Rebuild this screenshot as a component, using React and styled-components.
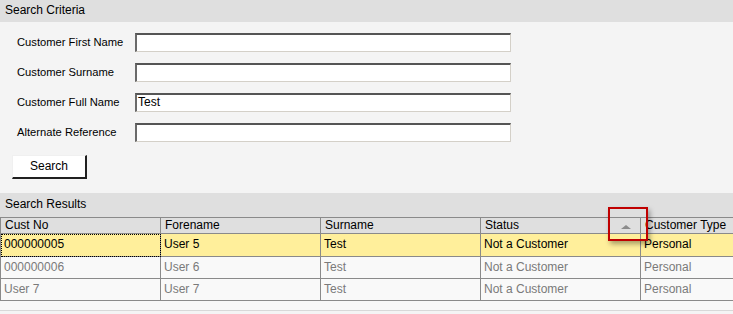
import React from "react";
import styled, { createGlobalStyle } from "styled-components";

const GlobalStyle = createGlobalStyle`
  html, body {
    margin: 0;
    padding: 0;
    background: #f4f4f4;
    font-family: "Liberation Sans", Arial, sans-serif;
    font-size: 11px;
    color: #000;
  }
`;

const Page = styled.div`
  width: 733px;
  height: 314px;
  overflow: hidden;
  background: #f4f4f4;
`;

const SectionBar = styled.div`
  height: 22px;
  line-height: 21px;
  padding-left: 5px;
  background: #dfdfdf;
  font-size: 12px;
`;

const Criteria = styled.div`
  display: flex;
  flex-direction: column;
  gap: 11px;
  padding: 11px 0 0 17px;
`;

const FieldRow = styled.div`
  display: flex;
  align-items: center;
  height: 19px;
`;

const Label = styled.label`
  width: 118px;
  margin-top: -2px;
  font-size: 11.2px;
`;

const TextBox = styled.div`
  box-sizing: border-box;
  width: 376px;
  height: 19px;
  background: #fff;
  border-top: 2px solid #555;
  border-left: 2px solid #6a6a6a;
  border-right: 1px solid #d4d0c8;
  border-bottom: 1px solid #d4d0c8;
  padding-left: 1px;
  line-height: 15px;
  font-size: 12px;
`;

const Button = styled.div`
  box-sizing: border-box;
  margin: 2px 0 0 -5px;
  width: 75px;
  height: 24px;
  background: #fff;
  border-top: 1px solid #f0f0f0;
  border-left: 1px solid #f0f0f0;
  border-right: 2px solid #202020;
  border-bottom: 2px solid #202020;
  text-align: center;
  line-height: 21px;
  font-size: 12px;
`;

const ResultsBar = styled(SectionBar)`
  margin-top: 14px;
  height: 24px;
  line-height: 22px;
`;

const GridWrap = styled.div`
  position: relative;
  background: #f8f8f8;
  height: 93px;
  border-bottom: 1px solid #d8d8d8;
`;

const Grid = styled.div`
  display: grid;
  grid-template-columns: repeat(5, 160px);
  border-top: 1px solid #8a8a8a;
  border-left: 1px solid #8a8a8a;
`;

const HeadCell = styled.div`
  position: relative;
  box-sizing: border-box;
  height: 16px;
  line-height: 15px;
  padding-left: 4px;
  background: #dfdfdf;
  border-right: 1px solid #8a8a8a;
  border-bottom: 1px solid #8a8a8a;
  font-size: 12px;
`;

const Cell = styled.div`
  box-sizing: border-box;
  height: ${(p) => (p.$first ? 23 : 22)}px;
  line-height: 21px;
  padding-left: 3px;
  background: ${(p) => (p.$selected ? "#ffef9b" : "#f9f9f9")};
  color: ${(p) => (p.$selected ? "#000" : "#7a7a7a")};
  border-right: 1px solid #8a8a8a;
  border-bottom: 1px solid #8a8a8a;
  font-size: 12px;
  white-space: nowrap;
  overflow: hidden;
  outline: ${(p) => (p.$focus ? "1px dotted #000" : "none")};
  outline-offset: -1px;
`;

const SortArrow = styled.span`
  position: absolute;
  right: 9px;
  top: 7px;
  width: 0;
  height: 0;
  border-left: 5px solid transparent;
  border-right: 5px solid transparent;
  border-bottom: 4px solid #8c8c8c;
`;

const Highlight = styled.div`
  position: absolute;
  left: 608px;
  top: -10px;
  width: 36px;
  height: 30px;
  border: 2px solid #c00000;
  box-shadow: 2px 3px 5px rgba(0, 0, 0, 0.35);
`;

const columns = ["Cust No", "Forename", "Surname", "Status", "Customer Type"];

const rows = [
  ["000000005", "User 5", "Test", "Not a Customer", "Personal"],
  ["000000006", "User 6", "Test", "Not a Customer", "Personal"],
  ["User 7", "User 7", "Test", "Not a Customer", "Personal"],
];

const fields = [
  ["Customer First Name", ""],
  ["Customer Surname", ""],
  ["Customer Full Name", "Test"],
  ["Alternate Reference", ""],
];

export default function App() {
  return (
    <Page>
      <GlobalStyle />
      <SectionBar>Search Criteria</SectionBar>
      <Criteria>
        {fields.map(([label, value]) => (
          <FieldRow key={label}>
            <Label>{label}</Label>
            <TextBox>{value}</TextBox>
          </FieldRow>
        ))}
        <Button>Search</Button>
      </Criteria>
      <ResultsBar>Search Results</ResultsBar>
      <GridWrap>
        <Grid>
          {columns.map((c) => (
            <HeadCell key={c}>
              {c}
              {c === "Status" && <SortArrow />}
            </HeadCell>
          ))}
          {rows.map((row, ri) =>
            row.map((v, ci) => (
              <Cell
                key={ri + "-" + ci}
                $selected={ri === 0}
                $first={ri === 0}
                $focus={ri === 0 && ci === 0}
              >
                {v}
              </Cell>
            ))
          )}
        </Grid>
        <Highlight />
      </GridWrap>
    </Page>
  );
}
